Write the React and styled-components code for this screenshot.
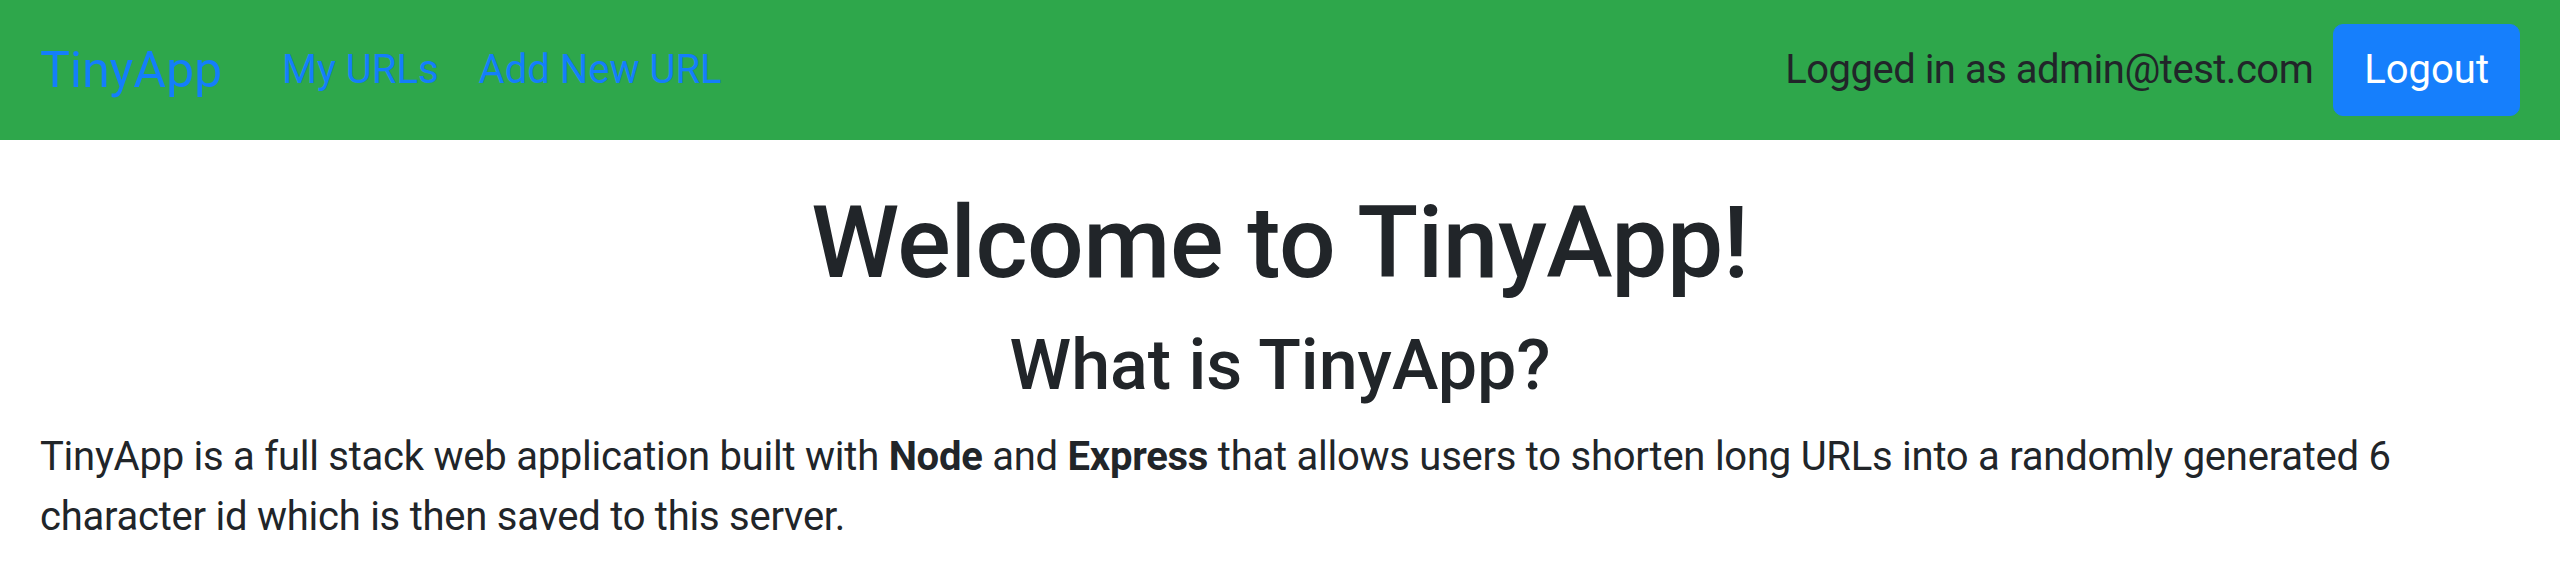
import styled, { createGlobalStyle } from "styled-components";

const GlobalStyle = createGlobalStyle`
  html, body {
    margin: 0;
    padding: 0;
    background: #fff;
  }
  body {
    font-family: Roboto, "Liberation Sans", Arial, sans-serif;
    font-size: 40px;
    line-height: 1.5;
    color: #212529;
  }
  * {
    box-sizing: border-box;
  }
`;

const Navbar = styled.nav`
  display: flex;
  align-items: center;
  height: 140px;
  padding: 20px 40px;
  background-color: #2ea74b;
`;

const Brand = styled.a`
  font-size: 50px;
  line-height: 75px;
  padding: 12.5px 0;
  margin-right: 40px;
  color: #147efb;
  text-decoration: none;
  cursor: pointer;
`;

const NavLinks = styled.div`
  display: flex;
  align-items: center;
`;

const NavLink = styled.a`
  padding: 0 20px;
  font-size: 40px;
  line-height: 60px;
  color: #147efb;
  text-decoration: none;
  cursor: pointer;
`;

const UserArea = styled.div`
  display: flex;
  align-items: center;
  gap: 20px;
  margin-left: auto;
`;

const UserText = styled.span`
  font-size: 40px;
  line-height: 60px;
  letter-spacing: -0.5px;
  color: #212529;
`;

const Button = styled.button`
  font-family: inherit;
  font-size: 40px;
  line-height: 60px;
  padding: 15px 30px;
  border: 1px solid #167ffc;
  border-radius: 10px;
  background-color: #167ffc;
  color: #fff;
  cursor: pointer;
`;

const Main = styled.main`
  padding: 43px 40px 0;
`;

const Title = styled.h1`
  margin: 0 0 20px;
  font-size: 100px;
  font-weight: 500;
  line-height: 1.2;
  letter-spacing: -0.5px;
  text-align: center;
`;

const SubTitle = styled.h3`
  margin: 0 0 20px;
  font-size: 70px;
  font-weight: 500;
  line-height: 1.2;
  text-align: center;
`;

const Text = styled.p`
  margin: 0;
  font-size: 40px;
  line-height: 60px;
  letter-spacing: -0.25px;
`;

export default function App() {
  return (
    <>
      <GlobalStyle />
      <Navbar>
        <Brand>TinyApp</Brand>
        <NavLinks>
          <NavLink>My URLs</NavLink>
          <NavLink>Add New URL</NavLink>
        </NavLinks>
        <UserArea>
          <UserText>Logged in as admin@test.com</UserText>
          <Button>Logout</Button>
        </UserArea>
      </Navbar>
      <Main>
        <Title>Welcome to TinyApp!</Title>
        <SubTitle>What is TinyApp?</SubTitle>
        <Text>
          TinyApp is a full stack web application built with <b>Node</b> and{" "}
          <b>Express</b> that allows users to shorten long URLs into a randomly
          generated 6 character id which is then saved to this server.
        </Text>
      </Main>
    </>
  );
}
